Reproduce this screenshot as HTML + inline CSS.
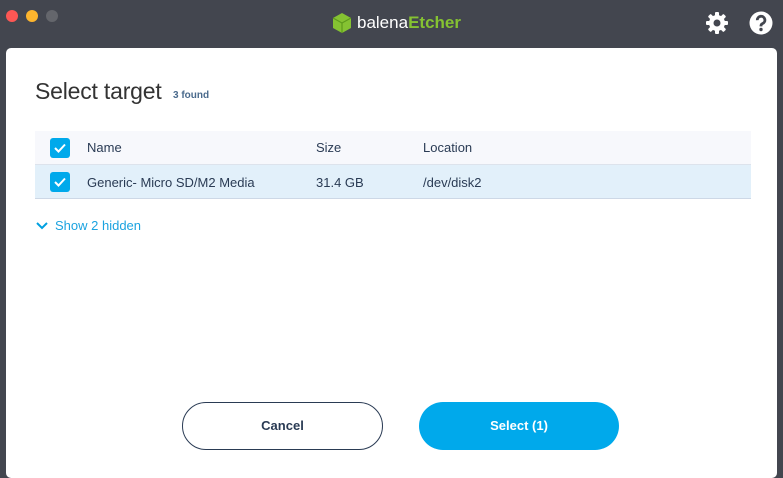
<!DOCTYPE html>
<html><head><meta charset="utf-8"><style>
*{margin:0;padding:0;box-sizing:border-box}
body{width:783px;height:469px;background:#43464f;font-family:"Liberation Sans",sans-serif;position:relative;overflow:hidden}
.dot{position:absolute;top:10px;width:12px;height:12px;border-radius:50%}
.card{position:absolute;left:6px;top:48px;width:771px;height:430px;background:#fff;border-radius:5px}
.abs{position:absolute}
.cb{position:absolute;width:20px;height:20px;border-radius:3px;background:#00a9eb}
.cb svg{position:absolute;left:4px;top:5px}
.t{font-size:13px;color:#2a3b54}
</style></head><body>
<div class="dot" style="left:6px;background:#fd5754"></div>
<div class="dot" style="left:26px;background:#fdb52e"></div>
<div class="dot" style="left:46px;background:#64666c"></div>
<svg class="abs" style="left:332px;top:12px" width="20" height="22" viewBox="0 0 20 22"><polygon points="10,1 19,6 19,16 10,21 1,16 1,6" fill="#85c232"/><polyline points="1,6 10,11 19,6" fill="none" stroke="#5d9a1c" stroke-width="1.2"/><polyline points="10,11 10,21" stroke="#5d9a1c" stroke-width="1.2"/></svg>
<div class="abs" style="left:357px;top:13px;font-size:17px;color:#fff">balena<span style="color:#85c232;font-weight:bold">Etcher</span></div>
<svg class="abs" style="left:705px;top:11px" width="24" height="24" viewBox="0 0 24 24"><g fill="#fff"><circle cx="12" cy="12" r="8"/><rect x="10" y="1" width="4" height="22" rx="1"/><rect x="10" y="1" width="4" height="22" rx="1" transform="rotate(45 12 12)"/><rect x="10" y="1" width="4" height="22" rx="1" transform="rotate(90 12 12)"/><rect x="10" y="1" width="4" height="22" rx="1" transform="rotate(135 12 12)"/></g><circle cx="12" cy="12" r="3.5" fill="#43464f"/></svg>
<svg class="abs" style="left:749px;top:11px" width="24" height="24" viewBox="0 0 24 24"><circle cx="12" cy="12" r="11.5" fill="#fff"/><path d="M8.3 9.2a3.8 3.8 0 1 1 5.2 3.4c-1 .5-1.5 1-1.5 2.2v.6" fill="none" stroke="#43464f" stroke-width="2.8"/><circle cx="12" cy="18.5" r="1.7" fill="#43464f"/></svg>
<div class="card">
<div class="abs" style="left:29px;top:30px;font-size:23px;color:#333;letter-spacing:-0.2px">Select target</div>
<div class="abs" style="left:167px;top:42px;font-size:10px;color:#4a6a8c;font-weight:bold">3 found</div>
<div class="abs" style="left:29px;top:83px;width:716px;height:34px;background:#f7f8fc;border-bottom:1px solid #dde3ec"></div>
<div class="abs" style="left:29px;top:117px;width:716px;height:34px;background:#e2f0fa;border-bottom:1px solid #cdd8e6"></div>
<div class="cb" style="left:44px;top:90px"><svg width="12" height="10"><polyline points="1,5 4.5,8.5 11,1.5" fill="none" stroke="#fff" stroke-width="2"/></svg></div>
<div class="cb" style="left:44px;top:124px"><svg width="12" height="10"><polyline points="1,5 4.5,8.5 11,1.5" fill="none" stroke="#fff" stroke-width="2"/></svg></div>
<div class="abs t" style="left:81px;top:92px">Name</div>
<div class="abs t" style="left:310px;top:92px">Size</div>
<div class="abs t" style="left:417px;top:92px">Location</div>
<div class="abs t" style="left:81px;top:127px">Generic- Micro SD/M2 Media</div>
<div class="abs t" style="left:310px;top:127px">31.4 GB</div>
<div class="abs t" style="left:417px;top:127px">/dev/disk2</div>
<svg class="abs" style="left:30px;top:173px" width="12" height="10"><polyline points="1,2 6,7 11,2" fill="none" stroke="#00a0e0" stroke-width="2"/></svg>
<div class="abs" style="left:49px;top:170px;font-size:13px;color:#1ba3e0">Show 2 hidden</div>
<div class="abs" style="left:176px;top:354px;width:201px;height:48px;border:1px solid #2a3b54;border-radius:24px;text-align:center;line-height:46px;font-size:13px;font-weight:bold;color:#2a3b54">Cancel</div>
<div class="abs" style="left:413px;top:354px;width:200px;height:48px;background:#00a9eb;border-radius:24px;text-align:center;line-height:48px;font-size:13px;font-weight:bold;color:#fff">Select (1)</div>
</div>
</body></html>
